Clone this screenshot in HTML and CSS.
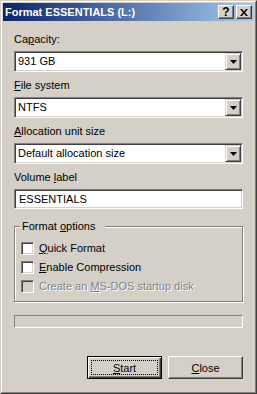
FILE: index.html
```html
<!DOCTYPE html>
<html lang="en">
<head>
    <meta charset="UTF-8">
    <meta name="viewport" content="width=device-width, initial-scale=1.0">
    <title>Format ESSENTIALS (L:)</title>
    <link rel="stylesheet" href="styles.css">
</head>
<body>
    <div class="window">
        <div class="frame">
            <div class="titlebar">
                <span class="title">Format ESSENTIALS (L:)</span>
                <div class="caption-buttons">
                    <button class="cap-btn help">?</button>
                    <button class="cap-btn close">
                        <svg width="8" height="7" viewBox="0 0 8 7">
                            <path d="M0 0h2l2 2.5 2-2.5h2l-3 3.5 3 3.5h-2l-2-2.5-2 2.5h-2l3-3.5z" fill="#000"/>
                        </svg>
                    </button>
                </div>
            </div>

            <div class="content">
                <div class="field">
                    <label class="field-label">Ca<u>p</u>acity:</label>
                    <div class="combo">
                        <span class="combo-value">931 GB</span>
                        <span class="combo-arrow">
                            <svg width="7" height="4" viewBox="0 0 7 4"><path d="M0 0h7l-3.5 4z" fill="#000"/></svg>
                        </span>
                    </div>
                </div>

                <div class="field">
                    <label class="field-label"><u>F</u>ile system</label>
                    <div class="combo">
                        <span class="combo-value">NTFS</span>
                        <span class="combo-arrow">
                            <svg width="7" height="4" viewBox="0 0 7 4"><path d="M0 0h7l-3.5 4z" fill="#000"/></svg>
                        </span>
                    </div>
                </div>

                <div class="field">
                    <label class="field-label"><u>A</u>llocation unit size</label>
                    <div class="combo">
                        <span class="combo-value">Default allocation size</span>
                        <span class="combo-arrow">
                            <svg width="7" height="4" viewBox="0 0 7 4"><path d="M0 0h7l-3.5 4z" fill="#000"/></svg>
                        </span>
                    </div>
                </div>

                <div class="field">
                    <label class="field-label">Volume <u>l</u>abel</label>
                    <div class="textbox">ESSENTIALS</div>
                </div>

                <div class="group">
                    <span class="group-label">Format <u>o</u>ptions</span>
                    <div class="check-row">
                        <span class="checkbox"></span>
                        <span><u>Q</u>uick Format</span>
                    </div>
                    <div class="check-row">
                        <span class="checkbox"></span>
                        <span><u>E</u>nable Compression</span>
                    </div>
                    <div class="check-row disabled">
                        <span class="checkbox"></span>
                        <span>Create an <u>M</u>S-DOS startup disk</span>
                    </div>
                </div>

                <div class="progress"></div>

                <div class="actions">
                    <button class="btn default"><span class="btn-face"><u>S</u>tart</span></button>
                    <button class="btn"><span class="btn-face"><u>C</u>lose</span></button>
                </div>
            </div>
        </div>
    </div>
</body>
</html>
```

FILE: styles.css
```css
:root {
    --face: #d4d0c8;
    --shadow: #808080;
    --dark: #404040;
    --light: #ffffff;
    --title-start: #0a246a;
    --title-end: #a6caf0;
}

* {
    box-sizing: border-box;
}

body {
    margin: 0;
    font-family: 'Liberation Sans', Arial, sans-serif;
    font-size: 11px;
    line-height: 13px;
    color: #000;
    background-color: var(--face);
}

u {
    text-decoration: underline;
    text-underline-offset: 1px;
}

.window {
    width: 257px;
    height: 394px;
    border: 1px solid;
    border-color: var(--face) var(--dark) var(--dark) var(--face);
}

.frame {
    height: 100%;
    padding: 1px;
    border: 1px solid;
    border-color: var(--light) var(--shadow) var(--shadow) var(--light);
    background-color: var(--face);
}

.titlebar {
    display: flex;
    align-items: center;
    justify-content: space-between;
    height: 18px;
    padding: 0 2px 0 2px;
    background: linear-gradient(to right, var(--title-start), var(--title-end));
}

.title {
    color: #fff;
    font-weight: bold;
    font-size: 11px;
    white-space: nowrap;
}

.caption-buttons {
    display: flex;
    gap: 2px;
}

.cap-btn {
    display: flex;
    align-items: center;
    justify-content: center;
    width: 16px;
    height: 14px;
    padding: 0;
    border: 1px solid;
    border-color: var(--light) var(--dark) var(--dark) var(--light);
    box-shadow: inset -1px -1px var(--shadow);
    background-color: var(--face);
    font-family: 'Liberation Sans', Arial, sans-serif;
    font-weight: bold;
    font-size: 12px;
    line-height: 12px;
    color: #000;
}

.content {
    padding: 12px 11px 0;
}

.field {
    margin-bottom: 7px;
}

.field-label {
    display: block;
    margin-bottom: 5px;
}

.combo,
.textbox {
    display: flex;
    align-items: center;
    height: 21px;
    padding: 2px;
    border: 1px solid;
    border-color: var(--shadow) var(--light) var(--light) var(--shadow);
    box-shadow: inset 1px 1px var(--dark), inset -1px -1px var(--face);
    background-color: #fff;
}

.textbox {
    height: 20px;
    padding-left: 4px;
}

.combo-value {
    flex: 1;
    padding-left: 1px;
}

.combo-arrow {
    display: flex;
    align-items: center;
    justify-content: center;
    width: 16px;
    height: 17px;
    margin: -1px -1px -1px 0;
    border: 1px solid;
    border-color: var(--face) var(--dark) var(--dark) var(--face);
    box-shadow: inset 1px 1px var(--light), inset -1px -1px var(--shadow);
    background-color: var(--face);
}

.group {
    position: relative;
    margin-top: 17px;
    padding: 15px 6px 8px;
    border: 1px solid var(--shadow);
    box-shadow: inset 1px 1px var(--light), 1px 1px var(--light);
}

.group-label {
    position: absolute;
    top: -7px;
    left: 5px;
    padding: 0 10px 0 2px;
    background-color: var(--face);
}

.check-row {
    display: flex;
    align-items: center;
    gap: 5px;
    height: 13px;
    margin-bottom: 6px;
}

.check-row:last-child {
    margin-bottom: 0;
}

.checkbox {
    width: 13px;
    height: 13px;
    border: 1px solid;
    border-color: var(--shadow) var(--light) var(--light) var(--shadow);
    box-shadow: inset 1px 1px var(--dark), inset -1px -1px var(--face);
    background-color: #fff;
}

.check-row.disabled {
    color: var(--shadow);
    text-shadow: 1px 1px var(--light);
}

.check-row.disabled .checkbox {
    background-color: var(--face);
}

.progress {
    height: 13px;
    margin-top: 13px;
    border: 1px solid;
    border-color: var(--shadow) var(--light) var(--light) var(--shadow);
}

.actions {
    display: flex;
    justify-content: flex-end;
    gap: 6px;
    margin-top: 28px;
}

.btn {
    width: 75px;
    height: 23px;
    padding: 3px;
    border: 1px solid;
    border-color: var(--light) var(--dark) var(--dark) var(--light);
    box-shadow: inset -1px -1px var(--shadow);
    background-color: var(--face);
    font-family: 'Liberation Sans', Arial, sans-serif;
    font-size: 11px;
    color: #000;
}

.btn.default {
    border: 1px solid #000;
    box-shadow: inset 1px 1px var(--light), inset -1px -1px var(--dark), inset -2px -2px var(--shadow);
}

.btn-face {
    display: flex;
    align-items: center;
    justify-content: center;
    height: 100%;
    border: 1px dotted transparent;
}

.btn.default .btn-face {
    border-color: #000;
}
```
